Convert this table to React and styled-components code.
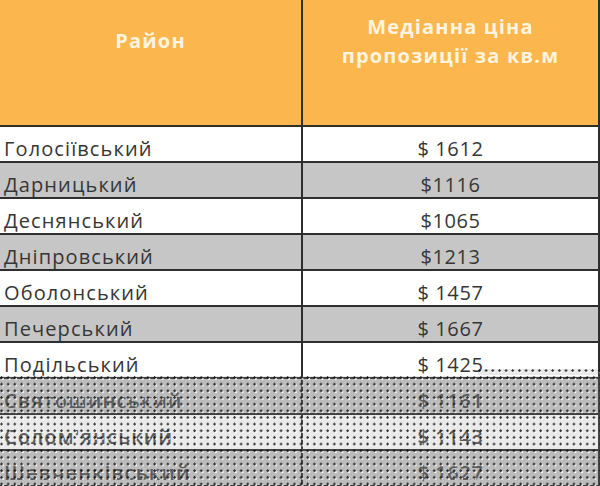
import React from 'react';
import styled, { createGlobalStyle } from 'styled-components';

const Global = createGlobalStyle`
	body {
		margin: 0;
		background: #ffffff;
	}
`;

const rows = [
	{ name: 'Голосіївський', price: '$ 1612', shade: false },
	{ name: 'Дарницький', price: '$1116', shade: true },
	{ name: 'Деснянський', price: '$1065', shade: false },
	{ name: 'Дніпровський', price: '$1213', shade: true },
	{ name: 'Оболонський', price: '$ 1457', shade: false },
	{ name: 'Печерський', price: '$ 1667', shade: true },
	{ name: 'Подільський', price: '$ 1425', shade: false },
	{ name: 'Святошинський', price: '$ 1161', shade: true, faded: true },
	{ name: "Солом'янський", price: '$ 1143', shade: false, faded: true },
	{ name: 'Шевченківський', price: '$ 1627', shade: true, faded: true },
];

const Wrap = styled.div`
	position: relative;
	width: 600px;
	height: 486px;
	overflow: hidden;
	font-family: "Open Sans", "DejaVu Sans", sans-serif;
`;

const Grid = styled.div`
	display: grid;
	grid-template-columns: 301px 297px;
	grid-template-rows: 127px repeat(10, 36px);
	width: 600px;
	border-right: 2px solid #2e2e2e;
	box-sizing: border-box;
`;

const HeadCell = styled.div`
	background: #fbb74e;
	color: #fff4de;
	font-weight: 700;
	font-size: 20px;
	line-height: 29px;
	letter-spacing: 1.2px;
	text-align: center;
	padding-top: ${p => p.$top}px;
	box-sizing: border-box;
	border-left: ${p => (p.$first ? 'none' : '2px solid #2e2e2e')};
	border-bottom: 2px solid #2e2e2e;
`;

const Cell = styled.div`
	background: ${p => (p.$shade ? '#c6c6c6' : '#ffffff')};
	color: ${p => (p.$faded ? '#4e4e4e' : '#363636')};
	font-size: 20px;
	font-weight: ${p => (p.$faded ? 600 : 400)};
	line-height: 34px;
	letter-spacing: ${p => (p.$center ? '0.6px' : '1.1px')};
	text-align: ${p => (p.$center ? 'center' : 'left')};
	padding-left: ${p => (p.$center ? '0' : '4px')};
	padding-top: 5px;
	box-sizing: border-box;
	border-left: ${p => (p.$center ? '2px solid #2e2e2e' : 'none')};
	border-bottom: 2px solid #2e2e2e;
	white-space: nowrap;
	overflow: hidden;
`;

const Dither = styled.div`
	position: absolute;
	right: 0;
	left: ${p => p.$left || 0}px;
	top: ${p => p.$top}px;
	height: ${p => p.$h}px;
	background-image:
		radial-gradient(circle at 1.5px 1.5px, rgba(20, 20, 20, 0.85) 1px, transparent 1.4px),
		radial-gradient(circle at 3px 3px, rgba(255, 255, 255, 0.9) 0.8px, transparent 1.2px);
	background-size: 6.67px 6.67px;
	background-color: rgba(150, 150, 150, 0.2);
	pointer-events: none;
`;

const App = () => (
	<>
		<Global />
		<Wrap>
			<Grid>
				<HeadCell $first $top={26}>Район</HeadCell>
				<HeadCell $top={12}>
					Медіанна ціна
					<br />
					пропозиції за кв.м
				</HeadCell>
				{rows.map(r => (
					<React.Fragment key={r.name}>
						<Cell $shade={r.shade} $faded={r.faded}>{r.name}</Cell>
						<Cell $shade={r.shade} $faded={r.faded} $center>{r.price}</Cell>
					</React.Fragment>
				))}
			</Grid>
			<Dither $top={369} $h={6} $left={478} />
			<Dither $top={376} $h={110} />
		</Wrap>
	</>
);

export default App;
